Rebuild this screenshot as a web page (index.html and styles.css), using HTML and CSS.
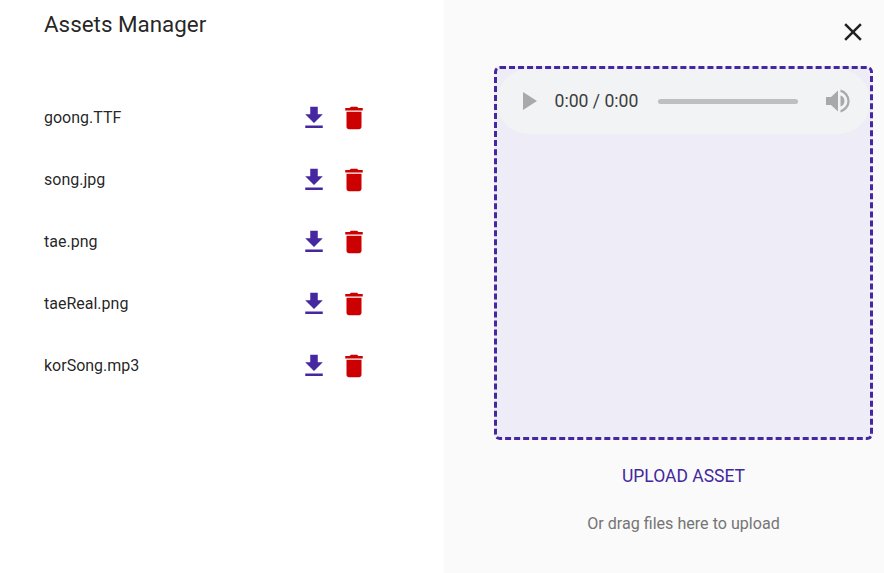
FILE: index.html
```html
<!DOCTYPE html>
<html lang="en">
<head>
  <meta charset="UTF-8" />
  <title>Assets Manager</title>
  <link rel="stylesheet" href="styles.css">
</head>
<body>
  <div class="manager">
    <section class="list-pane">
      <h1 class="title">Assets Manager</h1>
      <ul class="asset-list">
        <li class="asset-row">
          <span class="asset-name">goong.TTF</span>
          <svg class="icon icon-download" viewBox="0 0 24 24"><path d="M19 9h-4V3H9v6H5l7 7 7-7zM5 18v2h14v-2H5z"/></svg>
          <svg class="icon icon-delete" viewBox="0 0 24 24"><path d="M6 19c0 1.1.9 2 2 2h8c1.1 0 2-.9 2-2V7H6v12zM19 4h-3.500l-1-1h-5l-1 1H5v2h14V4z"/></svg>
        </li>
        <li class="asset-row">
          <span class="asset-name">song.jpg</span>
          <svg class="icon icon-download" viewBox="0 0 24 24"><path d="M19 9h-4V3H9v6H5l7 7 7-7zM5 18v2h14v-2H5z"/></svg>
          <svg class="icon icon-delete" viewBox="0 0 24 24"><path d="M6 19c0 1.1.9 2 2 2h8c1.1 0 2-.9 2-2V7H6v12zM19 4h-3.500l-1-1h-5l-1 1H5v2h14V4z"/></svg>
        </li>
        <li class="asset-row">
          <span class="asset-name">tae.png</span>
          <svg class="icon icon-download" viewBox="0 0 24 24"><path d="M19 9h-4V3H9v6H5l7 7 7-7zM5 18v2h14v-2H5z"/></svg>
          <svg class="icon icon-delete" viewBox="0 0 24 24"><path d="M6 19c0 1.1.9 2 2 2h8c1.1 0 2-.9 2-2V7H6v12zM19 4h-3.500l-1-1h-5l-1 1H5v2h14V4z"/></svg>
        </li>
        <li class="asset-row">
          <span class="asset-name">taeReal.png</span>
          <svg class="icon icon-download" viewBox="0 0 24 24"><path d="M19 9h-4V3H9v6H5l7 7 7-7zM5 18v2h14v-2H5z"/></svg>
          <svg class="icon icon-delete" viewBox="0 0 24 24"><path d="M6 19c0 1.1.9 2 2 2h8c1.1 0 2-.9 2-2V7H6v12zM19 4h-3.500l-1-1h-5l-1 1H5v2h14V4z"/></svg>
        </li>
        <li class="asset-row">
          <span class="asset-name">korSong.mp3</span>
          <svg class="icon icon-download" viewBox="0 0 24 24"><path d="M19 9h-4V3H9v6H5l7 7 7-7zM5 18v2h14v-2H5z"/></svg>
          <svg class="icon icon-delete" viewBox="0 0 24 24"><path d="M6 19c0 1.1.9 2 2 2h8c1.1 0 2-.9 2-2V7H6v12zM19 4h-3.500l-1-1h-5l-1 1H5v2h14V4z"/></svg>
        </li>
      </ul>
    </section>

    <section class="upload-pane">
      <div class="close-row">
        <svg class="icon-close" viewBox="0 0 24 24"><path d="M19 6.410 17.590 5 12 10.590 6.410 5 5 6.410 10.590 12 5 17.590 6.410 19 12 13.410 17.590 19 19 17.590 13.410 12z"/></svg>
      </div>
      <div class="drop-zone">
        <div class="player">
          <svg class="player-play" viewBox="0 0 14 18"><path d="M0 0l14 9-14 9z"/></svg>
          <span class="player-time">0:00 / 0:00</span>
          <div class="player-track"></div>
          <svg class="player-volume" viewBox="0 0 24 24"><path d="M0 8v8h5l7 6.500V1.500L5 8H0z"/><path d="M14.500 6.500a5.800 5.800 0 0 1 0 11z"/><path d="M14.500 0.500v2.600a9.200 9.200 0 0 1 0 17.800v2.600a11.800 11.800 0 0 0 0-23z"/></svg>
        </div>
      </div>
      <button type="button" class="upload-btn">Upload Asset</button>
      <p class="drag-hint">Or drag files here to upload</p>
    </section>
  </div>
</body>
</html>
```

FILE: styles.css
```css
html, body {
  margin: 0;
  height: 100%;
  overflow: hidden;
}

body {
  font-family: Roboto, sans-serif;
  background: #fff;
  color: rgba(0, 0, 0, 0.87);
}

.manager {
  display: flex;
  height: 573px;
}

/* Left side */
.list-pane {
  width: 444px;
  padding: 9px 0 0 44px;
  box-sizing: border-box;
}

.title {
  margin: 0;
  font-size: 22.4px;
  font-weight: 400;
  line-height: 30px;
}

.asset-list {
  list-style: none;
  margin: 47px 0 0;
  padding: 0;
}

.asset-row {
  display: flex;
  align-items: center;
  height: 62px;
  font-size: 16px;
}

.asset-name {
  width: 254.500px;
}

.icon {
  width: 30px;
  height: 30px;
  margin-top: 2px;
}

.icon-download {
  fill: #4527a0;
}

.icon-delete {
  margin-left: 10px;
  fill: #cc0000;
}

/* Right side */
.upload-pane {
  flex: 1;
  display: flex;
  flex-direction: column;
  align-items: center;
  padding: 0 11px 0 50px;
  background: #fafafa;
}

.close-row {
  align-self: stretch;
  display: flex;
  justify-content: flex-end;
  height: 66px;
  padding-top: 17px;
  box-sizing: border-box;
}

.icon-close {
  width: 30px;
  height: 30px;
  margin-right: 5px;
  fill: #212121;
}

.drop-zone {
  align-self: stretch;
  height: 374px;
  box-sizing: border-box;
  border: 3px dashed #4527a0;
  border-radius: 6px;
  background: #eeecf6;
}

.player {
  display: flex;
  align-items: center;
  height: 64px;
  padding-left: 26px;
  padding-bottom: 1px;
  border-radius: 32px;
  background: #f1f3f4;
}

.player-play {
  width: 14px;
  height: 18px;
  fill: #a9a9a9;
}

.player-time {
  margin-left: 17.500px;
  font-size: 17.600px;
  color: #3c3c3c;
}

.player-track {
  width: 140px;
  height: 5px;
  margin-left: 20px;
  border-radius: 3px;
  background: #bfbfbf;
}

.player-volume {
  width: 24px;
  height: 24px;
  margin-left: 28px;
  fill: #a9a9a9;
}

.upload-btn {
  margin-top: 26px;
  padding: 0;
  border: none;
  background: none;
  color: #4527a0;
  font-family: inherit;
  font-size: 17.500px;
  line-height: 20px;
  text-transform: uppercase;
}

.drag-hint {
  margin: 28px 0 0;
  font-size: 16.100px;
  line-height: 20px;
  color: #757575;
}
```
